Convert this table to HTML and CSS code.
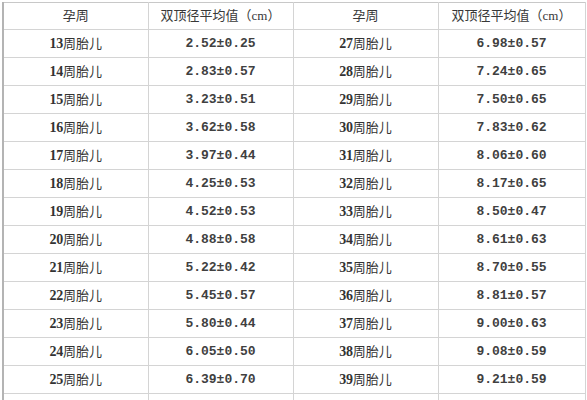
FILE: index.html
```html
<!DOCTYPE html>
<html lang="zh">
<head>
<meta charset="utf-8">
<link rel="stylesheet" href="styles.css">
</head>
<body>
<table class="bpd">
<colgroup><col class="c1"><col class="c2"><col class="c3"><col class="c4"></colgroup>
<thead>
<tr class="head"><th>孕周</th><th>双顶径平均值（cm）</th><th>孕周</th><th>双顶径平均值（cm）</th></tr>
</thead>
<tbody>
<tr><td class="wk"><b>13</b>周胎儿</td><td class="val">2.52±0.25</td><td class="wk"><b>27</b>周胎儿</td><td class="val">6.98±0.57</td></tr>
<tr><td class="wk"><b>14</b>周胎儿</td><td class="val">2.83±0.57</td><td class="wk"><b>28</b>周胎儿</td><td class="val">7.24±0.65</td></tr>
<tr><td class="wk"><b>15</b>周胎儿</td><td class="val">3.23±0.51</td><td class="wk"><b>29</b>周胎儿</td><td class="val">7.50±0.65</td></tr>
<tr><td class="wk"><b>16</b>周胎儿</td><td class="val">3.62±0.58</td><td class="wk"><b>30</b>周胎儿</td><td class="val">7.83±0.62</td></tr>
<tr><td class="wk"><b>17</b>周胎儿</td><td class="val">3.97±0.44</td><td class="wk"><b>31</b>周胎儿</td><td class="val">8.06±0.60</td></tr>
<tr><td class="wk"><b>18</b>周胎儿</td><td class="val">4.25±0.53</td><td class="wk"><b>32</b>周胎儿</td><td class="val">8.17±0.65</td></tr>
<tr><td class="wk"><b>19</b>周胎儿</td><td class="val">4.52±0.53</td><td class="wk"><b>33</b>周胎儿</td><td class="val">8.50±0.47</td></tr>
<tr><td class="wk"><b>20</b>周胎儿</td><td class="val">4.88±0.58</td><td class="wk"><b>34</b>周胎儿</td><td class="val">8.61±0.63</td></tr>
<tr><td class="wk"><b>21</b>周胎儿</td><td class="val">5.22±0.42</td><td class="wk"><b>35</b>周胎儿</td><td class="val">8.70±0.55</td></tr>
<tr><td class="wk"><b>22</b>周胎儿</td><td class="val">5.45±0.57</td><td class="wk"><b>36</b>周胎儿</td><td class="val">8.81±0.57</td></tr>
<tr><td class="wk"><b>23</b>周胎儿</td><td class="val">5.80±0.44</td><td class="wk"><b>37</b>周胎儿</td><td class="val">9.00±0.63</td></tr>
<tr><td class="wk"><b>24</b>周胎儿</td><td class="val">6.05±0.50</td><td class="wk"><b>38</b>周胎儿</td><td class="val">9.08±0.59</td></tr>
<tr><td class="wk"><b>25</b>周胎儿</td><td class="val">6.39±0.70</td><td class="wk"><b>39</b>周胎儿</td><td class="val">9.21±0.59</td></tr>
<tr class="tail"><td></td><td></td><td></td><td></td></tr>
</tbody>
</table>
</body>
</html>
```
FILE: styles.css
```css
html, body {
  margin: 0;
  padding: 0;
  background: #ffffff;
  overflow: hidden;
}
body {
  padding: 2px 0 0 2px;
}
.bpd {
  border-collapse: collapse;
  table-layout: fixed;
  width: 582px;
  color: #333333;
  font-family: "Liberation Serif", "Noto Sans CJK SC", serif;
  font-size: 13px;
}
.c1, .c2, .c3 { width: 145px; }
.c4 { width: 147px; }
.bpd th, .bpd td {
  border: 1px solid #d4d4d4;
  padding: 0;
  text-align: center;
  height: 27px;
  line-height: 27px;
  white-space: nowrap;
  overflow: hidden;
}
.bpd th {
  font-weight: normal;
  height: 26px;
  line-height: 26px;
  border-top-color: #c8c8c8;
  color: #383838;
}
.bpd tr > :first-child {
  border-left: 2px solid #b4b4b4;
}
.bpd tr > :nth-child(3) {
  border-left-color: #c4c4c4;
}
.wk {
  font-weight: normal;
  color: #333333;
}
.wk b {
  font-size: 14px;
  font-weight: bold;
  letter-spacing: -0.3px;
}
.val {
  font-family: "Liberation Mono", "Noto Sans CJK SC", monospace;
  font-weight: bold;
  font-size: 13px;
  color: #404040;
}
```
